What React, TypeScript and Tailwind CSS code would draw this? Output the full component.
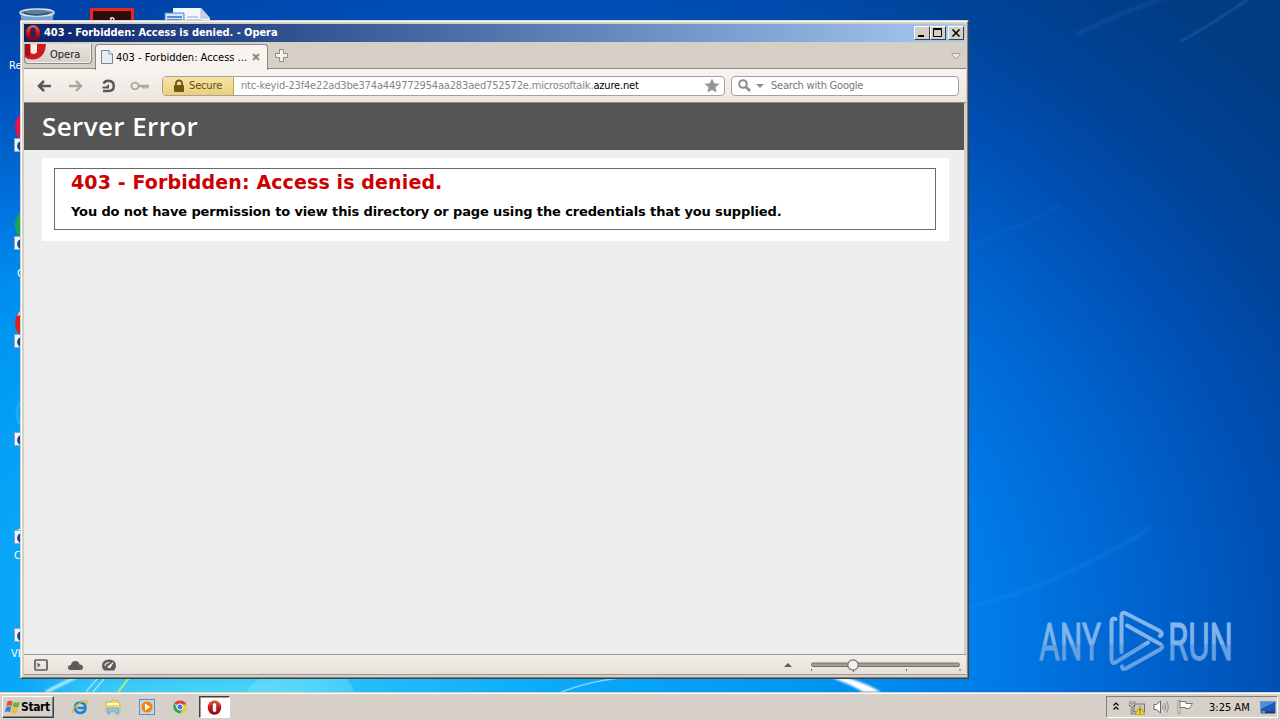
import type { ReactNode } from 'react'

const UI_FONT = "font-['DejaVu_Sans_Condensed','DejaVu_Sans',sans-serif] [font-stretch:condensed]"

const SHORTCUTS = [
  { top: 138, color: '#e8114f', label: '' },
  { top: 236, color: '#1da354', label: 'O' },
  { top: 334, color: '#d92020', label: '' },
  { top: 432, color: '', label: '' },
  { top: 530, color: '#f4f6f8', label: 'C' },
  { top: 628, color: '', label: 'VL' },
]

function OperaMark({ className, hole = '#fff' }: { className?: string; hole?: string }) {
  return (
    <svg viewBox="0 0 16 16" className={className}>
      <defs>
        <linearGradient id="operaRed" x1="0" y1="0" x2="0" y2="1">
          <stop offset="0" stopColor="#f0705c" />
          <stop offset="0.5" stopColor="#c8141a" />
          <stop offset="1" stopColor="#8c0008" />
        </linearGradient>
      </defs>
      <ellipse cx="8" cy="8" rx="7.2" ry="7.8" fill="url(#operaRed)" />
      <rect x="5.7" y="2.8" width="4.600" height="10.400" rx="2.200" fill={hole} stroke="#7c0508" strokeWidth="0.7" />
    </svg>
  )
}

function Wallpaper() {
  return (
    <svg viewBox="0 0 1280 692" className="absolute inset-0 h-full w-full">
      <defs>
        <filter id="soft">
          <feGaussianBlur stdDeviation="1.2" />
        </filter>
        <filter id="haze" x="-50%" y="-150%" width="200%" height="400%">
          <feGaussianBlur stdDeviation="16" />
        </filter>
      </defs>
      <ellipse cx="190" cy="694" rx="150" ry="14" fill="#7df0ee" opacity="0.7" filter="url(#haze)" />
      <path d="M970 607 Q1060 585 1150 528" stroke="#2b9bff" strokeWidth="5" opacity="0.16" fill="none" filter="url(#soft)" />
      <path d="M1180 42 Q1215 22 1250 -2" stroke="#6aa5d8" strokeWidth="2" opacity="0.28" fill="none" filter="url(#soft)" />
      <path d="M1075 35 Q1120 12 1170 -4" stroke="#4a88c8" strokeWidth="5" opacity="0.12" fill="none" filter="url(#soft)" />
      <path d="M972 244 Q1020 228 1060 205" stroke="#3b9cf0" strokeWidth="3" opacity="0.08" fill="none" filter="url(#soft)" />
      <path d="M46 692 L76 677" stroke="#c6f5ff" strokeWidth="3" filter="url(#soft)" />
      <path d="M86 692 Q92 684 98 678 M93 692 L104 679" stroke="#9ce6fb" strokeWidth="1.3" fill="none" />
      <path d="M118 692 L129 678" stroke="#a0ea8a" strokeWidth="2.2" />
      <path d="M246 692 Q252 682 262 678 L346 678 Q352 684 354 692Z" fill="#9aeeff" opacity="0.28" />
      <path d="M561 692 Q590 681 620 678" stroke="#7ad6ff" strokeWidth="1.6" fill="none" />
      <path d="M832 678 L848 678 Q868 684 881 692 L863 692 Q850 684 832 678Z" fill="#fff" filter="url(#soft)" />
      <path d="M20 402 Q14 412 20 425" stroke="#45c4ff" strokeWidth="3" opacity="0.4" fill="none" />
    </svg>
  )
}

function DesktopIcons() {
  return (
    <div className={`text-[11px] leading-[13px] text-white ${UI_FONT}`}>
      <svg viewBox="0 0 40 24" className="absolute left-[17px] top-[7px] h-6 w-10">
        <path d="M3 5 L6 24 H34 L37 5Z" fill="#9cc3e4" opacity="0.75" />
        <ellipse cx="20" cy="5.5" rx="17" ry="3.5" fill="#5f7f9c" stroke="#d5e4ee" strokeWidth="1.6" />
        <path d="M7 6 Q20 10 32 6" stroke="#2c4d6d" strokeWidth="1.5" fill="none" />
      </svg>
      <div className="absolute left-[90px] top-2 h-5 w-11 border-[3px] border-[#e8261c] bg-[#2b0b0b]">
        <svg viewBox="0 0 38 14" className="h-3.5 w-[38px]">
          <path d="M17 14 Q19 9 17.5 7.5 Q19.5 5.5 21 8 Q20 10 22 14" stroke="#fff" strokeWidth="1.3" fill="none" />
        </svg>
      </div>
      <svg viewBox="0 0 48 24" className="absolute left-[163px] top-[7px] h-6 w-12">
        <path d="M10 1 H38 L47 11 V24 H10Z" fill="#f3f7fc" />
        <path d="M38 1 L47 11 H38Z" fill="#c5d6ea" stroke="#8ba7c8" strokeWidth="0.6" />
        <path d="M2 6 H21 V20 H2Z" fill="#d4e4f7" stroke="#4f83c9" />
        <path d="M4 10 H19 M4 13 H19" stroke="#3c6fb8" strokeWidth="1.5" />
        <path d="M24 10 H35 M24 13 H39" stroke="#8aa9d4" />
      </svg>
      <span className="absolute left-[9px] top-[59px]">Re</span>

      {SHORTCUTS.map((s) => (
        <div key={s.top}>
          {s.color && (
            <svg viewBox="0 0 12 40" className="absolute left-[13px] h-10 w-3" style={{ top: s.top - 30 }}>
              {s.label === 'C' ? (
                <path d="M4 30 L12 26 V31 H4Z" fill={s.color} />
              ) : (
                <ellipse cx="18" cy="19" rx="16" ry="17" fill={s.color} />
              )}
              {s.top === 334 && <path d="M4 12 Q7 5 12 2 V10 Z" fill="#eef1f2" opacity="0.8" />}
            </svg>
          )}
          <svg viewBox="0 0 14 14" className="absolute left-[14px] h-3.5 w-3.5" style={{ top: s.top }}>
            <rect x="0.5" y="0.5" width="13" height="13" fill="#eff5fa" stroke="#8ea6bb" />
            <path d="M6 13 Q2 10 3.500 6 Q4 4 6 3.500 V1.500 L12 6 L7 11 Z" fill="#17468c" />
          </svg>
          {s.label && (
            <span className={`absolute ${s.label === 'VL' ? 'left-[11px]' : s.label === 'O' ? 'left-[17px]' : 'left-[14px]'}`} style={{ top: s.top + (s.label === 'O' ? 31 : 19) }}>
              {s.label}
            </span>
          )}
        </div>
      ))}
    </div>
  )
}

function Watermark() {
  return (
    <svg viewBox="0 0 240 70" className="absolute left-[1036px] top-[605px] h-[70px] w-[240px]">
      <defs>
        <linearGradient id="mark" x1="0" y1="5" x2="0" y2="67" gradientUnits="userSpaceOnUse">
          <stop offset="0" stopColor="#86b7ec" />
          <stop offset="0.54" stopColor="#80b2ea" />
          <stop offset="0.57" stopColor="#66a0e2" />
          <stop offset="1" stopColor="#66a0e2" />
        </linearGradient>
      </defs>
      <g fill="url(#mark)" stroke="url(#mark)" strokeWidth="1" className="font-[Roboto,sans-serif]" fontSize="51" fontWeight="400">
        <text x="3" y="54.500" textLength="62" lengthAdjust="spacingAndGlyphs">ANY</text>
        <text x="132" y="54.500" textLength="65" lengthAdjust="spacingAndGlyphs">RUN</text>
      </g>
      <g fill="none" stroke="url(#mark)" strokeWidth="4" strokeLinejoin="round" strokeLinecap="round">
        <path d="M79.500 14 Q75.500 12 75.500 17 V54 Q75.500 60 80 57 L112 37.500" />
        <path d="M85.500 47 V11 Q85.500 6 90 8.500 L123 25.500 Q128 28.500 124 31" />
        <path d="M91 20.500 L124 39 Q128.500 42 124 44.500 L90 63.500 Q86 65 86 61.500" />
      </g>
    </svg>
  )
}

function CaptionButton({ children }: { children: ReactNode }) {
  return (
    <button className="flex h-3.5 w-4 items-center justify-center border border-b-[#404040] border-l-white border-r-[#404040] border-t-white bg-[#d4d0c8]">
      {children}
    </button>
  )
}

function TitleBar() {
  return (
    <div className="flex h-[18px] items-center bg-linear-to-r from-[#0a246a] to-[#a6caf0] pl-[1px] pr-[1px]">
      <OperaMark className="h-4 w-4" hole="#1a2a6c" />
      <span className="ml-[3px] flex-1 whitespace-nowrap text-[11px] font-bold leading-[18px] tracking-[-0.06px] text-white">
        403 - Forbidden: Access is denied. - Opera
      </span>
      <CaptionButton>
        <svg viewBox="0 0 14 12" className="h-3 w-3.5"><path d="M3 9 H9" stroke="#000" strokeWidth="2" /></svg>
      </CaptionButton>
      <CaptionButton>
        <svg viewBox="0 0 14 12" className="h-3 w-3.5"><path d="M2.500 2.500 H10.500 V9.500 H2.500Z M2 1.500 H11" stroke="#000" fill="none" /></svg>
      </CaptionButton>
      <span className="w-0.5" />
      <CaptionButton>
        <svg viewBox="0 0 14 12" className="h-3 w-3.5"><path d="M3.500 2.500 L10.500 9.500 M10.500 2.500 L3.500 9.500" stroke="#000" strokeWidth="1.6" /></svg>
      </CaptionButton>
    </div>
  )
}

function TabBar() {
  return (
    <div className="flex h-[27px] items-start border-b border-[#8b8781] bg-[#d6cfc6]">
      <button className="relative mt-0.5 flex h-5 w-[68px] items-center overflow-hidden rounded-b-[4px] border border-t-0 border-[#8b8781] bg-linear-to-b from-[#e9e5df] to-[#d5cfc7] shadow-[inset_-1px_-1px_0_#f3f0ec]">
        <svg viewBox="0 0 22 16" className="-mt-1 h-4 w-[22px]">
          <path d="M0 0 H21 Q20 15 8 15.500 Q2 15.500 0 13Z" fill="#cf1a20" />
          <path d="M0 0 H5 V13 Q1 12 0 10Z" fill="#a80d14" />
          <path d="M5.500 0 H12 V8 Q11 10 8.500 10 Q6 10 5.500 8Z" fill="#f6ece8" />
        </svg>
        <span className="ml-[3px] pt-0.5 text-[11px] leading-5 text-[#222]">Opera</span>
      </button>
      <div className="relative ml-[3px] mt-0.5 flex h-[26px] w-[173px] items-center rounded-t-[4px] border border-b-0 border-[#8b8781] bg-[#f7f4f0] pb-0.5 pl-[5px] pr-[7px]">
        <svg viewBox="0 0 12 14" className="h-3.5 w-3">
          <path d="M0.500 0.500 H8 L11.500 4 V13.500 H0.500Z" fill="#e7edf3" stroke="#7d8792" />
          <path d="M8 0.500 V4 H11.500" fill="#fff" stroke="#7d8792" />
        </svg>
        <span className="ml-[3px] flex-1 whitespace-nowrap pt-0.5 text-[11px] leading-5 text-black">403 - Forbidden: Access ...</span>
        <svg viewBox="0 0 8 8" className="h-2 w-2"><path d="M1 1 L7 7 M7 1 L1 7" stroke="#8d8984" strokeWidth="2" /></svg>
      </div>
      <svg viewBox="0 0 13 13" className="ml-[7px] mt-[7px] h-[13px] w-[13px]">
        <path d="M4.500 0.500 H8.500 V4.500 H12.500 V8.500 H8.500 V12.500 H4.500 V8.500 H0.500 V4.500 H4.500Z" fill="#f4f1ed" stroke="#8f8b85" />
      </svg>
      <svg viewBox="0 0 10 8" className="ml-auto mr-[5px] mt-2.5 h-2 w-2.5">
        <path d="M1 1.500 H9 V3 L5 6.500 L1 3Z" fill="#eeeae5" stroke="#a39d95" />
      </svg>
    </div>
  )
}

function Toolbar() {
  return (
    <div className="flex h-[34px] items-center border-b border-[#8f8a83] bg-linear-to-b from-[#f7f4f0] to-[#ece5de] text-[11px]">
      <div className="flex w-[138px] items-center">
        <svg viewBox="0 0 14 12" className="ml-[13px] h-3 w-3.5"><path d="M14 6 H2 M7 1 L2 6 L7 11" stroke="#5a5854" strokeWidth="2.6" fill="none" /></svg>
        <svg viewBox="0 0 14 12" className="ml-[18px] h-3 w-3.5"><path d="M0 6 H12 M7 1 L12 6 L7 11" stroke="#aaa6a0" strokeWidth="2.4" fill="none" /></svg>
        <svg viewBox="0 0 15 14" className="ml-[18px] h-3.5 w-[15px]">
          <path d="M2.500 4.500 Q4 1.700 7.500 1.700 Q12.800 2 12.800 7 Q12.800 12 7.500 12 H2" stroke="#5a5854" strokeWidth="2.500" fill="none" />
          <path d="M8 5 V9.500 H1.500 V7.500 H5Z" fill="#5a5854" />
        </svg>
        <svg viewBox="0 0 20 10" className="ml-[14px] h-2.5 w-5">
          <ellipse cx="5" cy="5" rx="3.600" ry="3.300" stroke="#aaa6a0" strokeWidth="1.800" fill="none" />
          <path d="M8.500 5 H19 M13.500 5 V7.500 M17 5 V7.500" stroke="#aaa6a0" strokeWidth="2.400" fill="none" />
        </svg>
      </div>

      {/* Address field */}
      <div className="flex h-5 w-[563px] items-center overflow-hidden rounded-[4px] border border-[#a5a09a] bg-white">
        <div className="flex h-full w-[71px] items-center border-r border-[#b8a468] bg-linear-to-b from-[#f8e4a4] to-[#ebcf7c] pl-2.5">
          <svg viewBox="0 0 12 14" className="h-3.5 w-3">
            <path d="M3 7 V4.500 Q3 1.500 6 1.500 Q9 1.500 9 4.500 V7" stroke="#6b5a12" strokeWidth="1.8" fill="none" />
            <rect x="1" y="6" width="10" height="7" rx="1" fill="#6b5a12" />
          </svg>
          <span className="ml-1 pt-0.5 tracking-[-0.15px] text-[#5c4e1c]">Secure</span>
        </div>
        <span className="ml-[7px] flex-1 whitespace-nowrap pt-0.5 tracking-[-0.165px] text-[#858585]">
          ntc-keyid-23f4e22ad3be374a449772954aa283aed752572e.microsoftaik.<span className="text-black">azure.net</span>
        </span>
        <svg viewBox="0 0 16 15" className="mr-1 h-[15px] w-4">
          <path d="M8 0.500 L10.200 5.200 L15.500 5.800 L11.500 9.300 L12.600 14.500 L8 11.900 L3.400 14.500 L4.500 9.300 L0.500 5.800 L5.800 5.200Z" fill="#969696" />
        </svg>
      </div>

      {/* Search field */}
      <div className="ml-1.5 flex h-5 w-[228px] items-center rounded-[4px] border border-[#a5a09a] bg-white pl-1.5">
        <svg viewBox="0 0 13 13" className="h-[13px] w-[13px]">
          <circle cx="5" cy="5" r="3.800" stroke="#8e8e8e" strokeWidth="2" fill="none" />
          <path d="M8 8 L12 12" stroke="#8e8e8e" strokeWidth="2.600" />
        </svg>
        <svg viewBox="0 0 8 4" className="ml-[5px] h-1 w-2"><path d="M0 0 H8 L4 4Z" fill="#8e8e8e" /></svg>
        <span className="ml-[7px] whitespace-nowrap pt-0.5 tracking-[-0.22px] text-[#757575]">Search with Google</span>
      </div>
    </div>
  )
}

function ErrorPage() {
  return (
    <div className="mr-[2px] flex-1 bg-[#eeeeee] [font-stretch:normal]">
      <div className="flex h-[47px] items-center bg-[#555555] pl-[18px]">
        <h1 className="whitespace-nowrap font-['Open_Sans',sans-serif] text-[26px] font-semibold leading-[49px] tracking-[0.4px] text-white">Server Error</h1>
      </div>
      <div className="ml-[18px] mr-[15px] mt-2 h-[83px] bg-white pl-3 pr-[13px] pt-2.5 font-['DejaVu_Sans',sans-serif] font-bold">
        <div className="h-[62px] border border-[#6a6a6a] pl-4">
          <h2 className="whitespace-nowrap text-[19px] leading-[27px] tracking-[0.12px] text-[#cc0000]">403 - Forbidden: Access is denied.</h2>
          <h3 className="mt-[6px] whitespace-nowrap text-[13px] leading-5 tracking-[-0.13px] text-black">
            You do not have permission to view this directory or page using the credentials that you supplied.
          </h3>
        </div>
      </div>
    </div>
  )
}

function StatusBar() {
  return (
    <div className="flex h-[21px] items-center border-y border-[#9d9891] bg-linear-to-b from-[#f3eeea] to-[#e7dfd8]">
      <svg viewBox="0 0 14 12" className="ml-2.5 h-3 w-3.5">
        <rect x="1" y="1" width="12" height="10" rx="1" stroke="#5f5c58" strokeWidth="1.700" fill="none" />
        <path d="M3.500 3.500 L6.500 6 L3.500 8.500Z" fill="#5f5c58" />
      </svg>
      <svg viewBox="0 0 15 10" className="ml-5 h-2.5 w-[15px]">
        <path d="M3 10 Q0 10 0 7.500 Q0 5 3 5 Q3.500 1 7.500 1 Q11 1 11.500 4.500 Q15 4.500 15 7.500 Q15 10 12 10Z" fill="#5f5c58" />
      </svg>
      <svg viewBox="0 0 14 12" className="ml-[19px] h-3 w-3.5">
        <path d="M2 11.500 Q0 9 0 7 Q0 0.500 7 0.500 Q14 0.500 14 7 Q14 9 12 11.500Z" fill="#5f5c58" />
        <path d="M3 7 Q3 3.500 7.500 3.500" stroke="#f0ebe6" strokeWidth="1.200" fill="none" />
        <path d="M5.500 8 L11 3.500 L8 9Z" stroke="#f0ebe6" strokeWidth="0.800" fill="#f0ebe6" />
      </svg>
      <svg viewBox="0 0 8 4" className="ml-auto mr-[18px] h-1 w-2"><path d="M0 4 L4 0 L8 4Z" fill="#5f5c58" /></svg>
      <svg viewBox="0 0 151 16" className="mr-[5px] h-4 w-[151px]">
        <rect x="1.500" y="6" width="148" height="3.500" rx="1.500" fill="#a29e97" stroke="#77736d" />
        <path d="M1.500 12 V14 M43.500 12 V15 M96.500 12 V14 M150 12 V14" stroke="#6c6963" />
        <circle cx="43" cy="8" r="5.200" fill="#f3f1ee" stroke="#74706b" strokeWidth="1.200" />
      </svg>
    </div>
  )
}

function BrowserWindow() {
  return (
    <div className={`absolute left-5 top-5 flex h-[659px] w-[949px] flex-col border border-b-[#404040] border-l-[#d4d0c8] border-r-[#404040] border-t-[#d4d0c8] bg-[#d4d0c8] ${UI_FONT}`}>
      <div className="flex min-h-0 flex-1 flex-col border border-b-[#808080] border-l-white border-r-[#808080] border-t-white pb-0.5 pl-0.5 pr-[1px] pt-0.5">
        <div className="mr-[1px]"><TitleBar /></div>
        <TabBar />
        <Toolbar />
        <ErrorPage />
        <StatusBar />
      </div>
    </div>
  )
}

function Taskbar() {
  return (
    <div className={`flex h-7 shrink-0 items-start border-t border-[#d4d0c8] bg-[#d6d0c8] pt-[3px] shadow-[inset_0_1px_0_#fff] ${UI_FONT}`}>
      <button className="ml-0.5 flex h-[22px] w-[52px] items-center border border-b-[#404040] border-l-white border-r-[#404040] border-t-white pl-0.5 shadow-[inset_-1px_-1px_0_#808080]">
        <svg viewBox="0 0 16 14" className="h-3.5 w-4">
          <path d="M2.500 1.500 Q5 0 7.500 1.500 L6.500 6 Q4 5 1.500 6Z" fill="#e8502a" />
          <path d="M8.500 2 Q11 3.500 15 2 L13.500 7 Q10.500 8 7.500 6.500Z" fill="#6cb33e" />
          <path d="M1.200 7 Q4 6 6.300 7 L5 12 Q2.500 11 0 12Z" fill="#3d7fd0" />
          <path d="M7.300 7.500 Q10 9 13.300 8 L12 13 Q9 14 6 12.500Z" fill="#f4bd2c" />
        </svg>
        <span className="text-[12px] font-bold leading-4 tracking-[-0.4px] text-black">Start</span>
      </button>
      <div className="ml-[18px] flex items-center">
        <svg viewBox="0 0 16 16" className="h-4 w-4">
          <path d="M13.500 10.500 Q12 14 8 14 Q3 13.500 3 8.500 Q3.500 3.500 8.500 3.500 Q13.500 4 13.500 9 H5.500" stroke="#1b84d8" strokeWidth="2.700" fill="none" />
          <path d="M1 14.500 Q-0.500 11 5 6 Q12 0.500 15 1.500 Q16 3 14 5.500" stroke="#e8b830" strokeWidth="1.300" fill="none" />
        </svg>
        <svg viewBox="0 0 16 16" className="ml-[17px] h-4 w-4">
          <path d="M1 3 H6 L7 1.500 H13 V4 H15 V13 H1Z" fill="#f2d675" stroke="#d1ae48" strokeWidth="0.700" />
          <path d="M2 5 H14" stroke="#fff6ca" strokeWidth="2" />
          <path d="M2.500 15 V9 H13.500 V15 H11 V12 H5 V15Z" fill="#8ecdf0" stroke="#4a9fd0" strokeWidth="0.700" />
        </svg>
        <svg viewBox="0 0 16 16" className="ml-[18px] h-4 w-4">
          <rect x="0.500" y="0.500" width="15" height="15" fill="#b9d9f3" stroke="#5a90c8" />
          <circle cx="8" cy="8" r="6" fill="#f58412" stroke="#fbd39c" strokeWidth="0.700" />
          <path d="M6 4.500 L11.500 8 L6 11.500Z" fill="#fff" />
        </svg>
        <svg viewBox="0 0 16 16" className="ml-[17px] h-4 w-4">
          <path d="M8 8 L2 4 Q4 1.500 8 1.500 Q12.500 1.500 14.500 5.500 H8Z" fill="#df3d30" />
          <path d="M8 8 L14.500 5.500 Q16.500 13.500 8 14.700Z" fill="#f7c92e" />
          <path d="M2 4 Q-1 12.500 8 14.700 L11 9.500 L5 9.500Z" fill="#32a350" />
          <circle cx="8" cy="8" r="3.100" fill="#3b7ee6" stroke="#fff" strokeWidth="1" />
        </svg>
        <div className="ml-[11px] flex h-[22px] w-[31px] items-center justify-center border border-b-white border-l-[#404040] border-r-white border-t-[#404040] bg-white shadow-[inset_1px_1px_0_#a09c96]">
          <OperaMark className="h-[15px] w-[15px]" />
        </div>
      </div>
      <div className="ml-auto mr-0.5 flex h-[22px] w-[172px] items-center border border-b-white border-l-[#808080] border-r-white border-t-[#808080] pl-1.5 text-[11px]">
        <svg viewBox="0 0 6 8" className="mb-0.5 h-2 w-1.5"><path d="M0.500 3.500 L3 1 L5.500 3.500 M0.500 7.500 L3 5 L5.500 7.500" stroke="#000" strokeWidth="1.200" fill="none" /></svg>
        <svg viewBox="0 0 16 15" className="ml-2.5 h-[15px] w-4">
          <rect x="5" y="4" width="10.500" height="8" fill="#c8c8c2" stroke="#777" />
          <path d="M1 1 V5 H5 V1 M3 5 V13 H7" stroke="#555" strokeWidth="2.400" fill="none" />
          <path d="M1 1 V5 H5 V1 M3 5 V13 H7" stroke="#fff" strokeWidth="0.900" fill="none" />
          <path d="M11 6 L15.800 14.500 H6.200Z" fill="#f5d920" stroke="#a88e10" strokeWidth="0.600" />
          <path d="M11 8.500 V11.500 M11 12.500 V13.700" stroke="#333" />
        </svg>
        <svg viewBox="0 0 16 14" className="ml-2 h-3.5 w-4">
          <path d="M1 4.500 H3.500 L7.500 1 V13 L3.500 9.500 H1Z" fill="#fff" stroke="#666" />
          <path d="M9.500 5 Q11 7 9.500 9 M11.500 3 Q14 7 11.500 11 M13.500 1.500 Q17 7 13.500 12.500" stroke="#888" fill="none" />
        </svg>
        <svg viewBox="0 0 16 14" className="ml-2 h-3.5 w-4">
          <path d="M1 0.500 H3 V13.500 H1Z" fill="#fff" stroke="#777" strokeWidth="0.800" />
          <path d="M3 1.500 H9 V3.500 H15.500 L12.500 8.500 H8.500 V7.500 H3Z" fill="#fff" stroke="#777" />
        </svg>
        <span className="ml-4 whitespace-nowrap pt-0.5 text-black">3:25 AM</span>
        <svg viewBox="0 0 16 13" className="ml-auto mr-[1px] h-[13px] w-4">
          <rect x="0.500" y="0.500" width="15" height="11" fill="#1e56b8" stroke="#7599c9" />
          <path d="M1 1 H15 L1 8Z" fill="#4d8ee0" />
          <path d="M1 11.500 H15" stroke="#17386f" strokeWidth="2" />
          <path d="M1.500 11 H5" stroke="#d8e6f8" />
        </svg>
      </div>
    </div>
  )
}

export default function App() {
  return (
    <div className="flex h-[720px] w-[1280px] flex-col overflow-hidden">
      <div className="relative flex-1 overflow-hidden bg-[radial-gradient(800px_280px_at_100px_0px,rgba(0,50,150,0.6),rgba(0,50,150,0)),radial-gradient(1250px_900px_at_300px_640px,#30c8fc_0%,#0caafa_20%,#0098f2_40%,#007eea_54%,#0068d4_65%,#0050b4_78%,#00449a_87%,#003c82_100%)]">
        <Wallpaper />
        <DesktopIcons />
        <Watermark />
        <BrowserWindow />
      </div>
      <Taskbar />
    </div>
  )
}
